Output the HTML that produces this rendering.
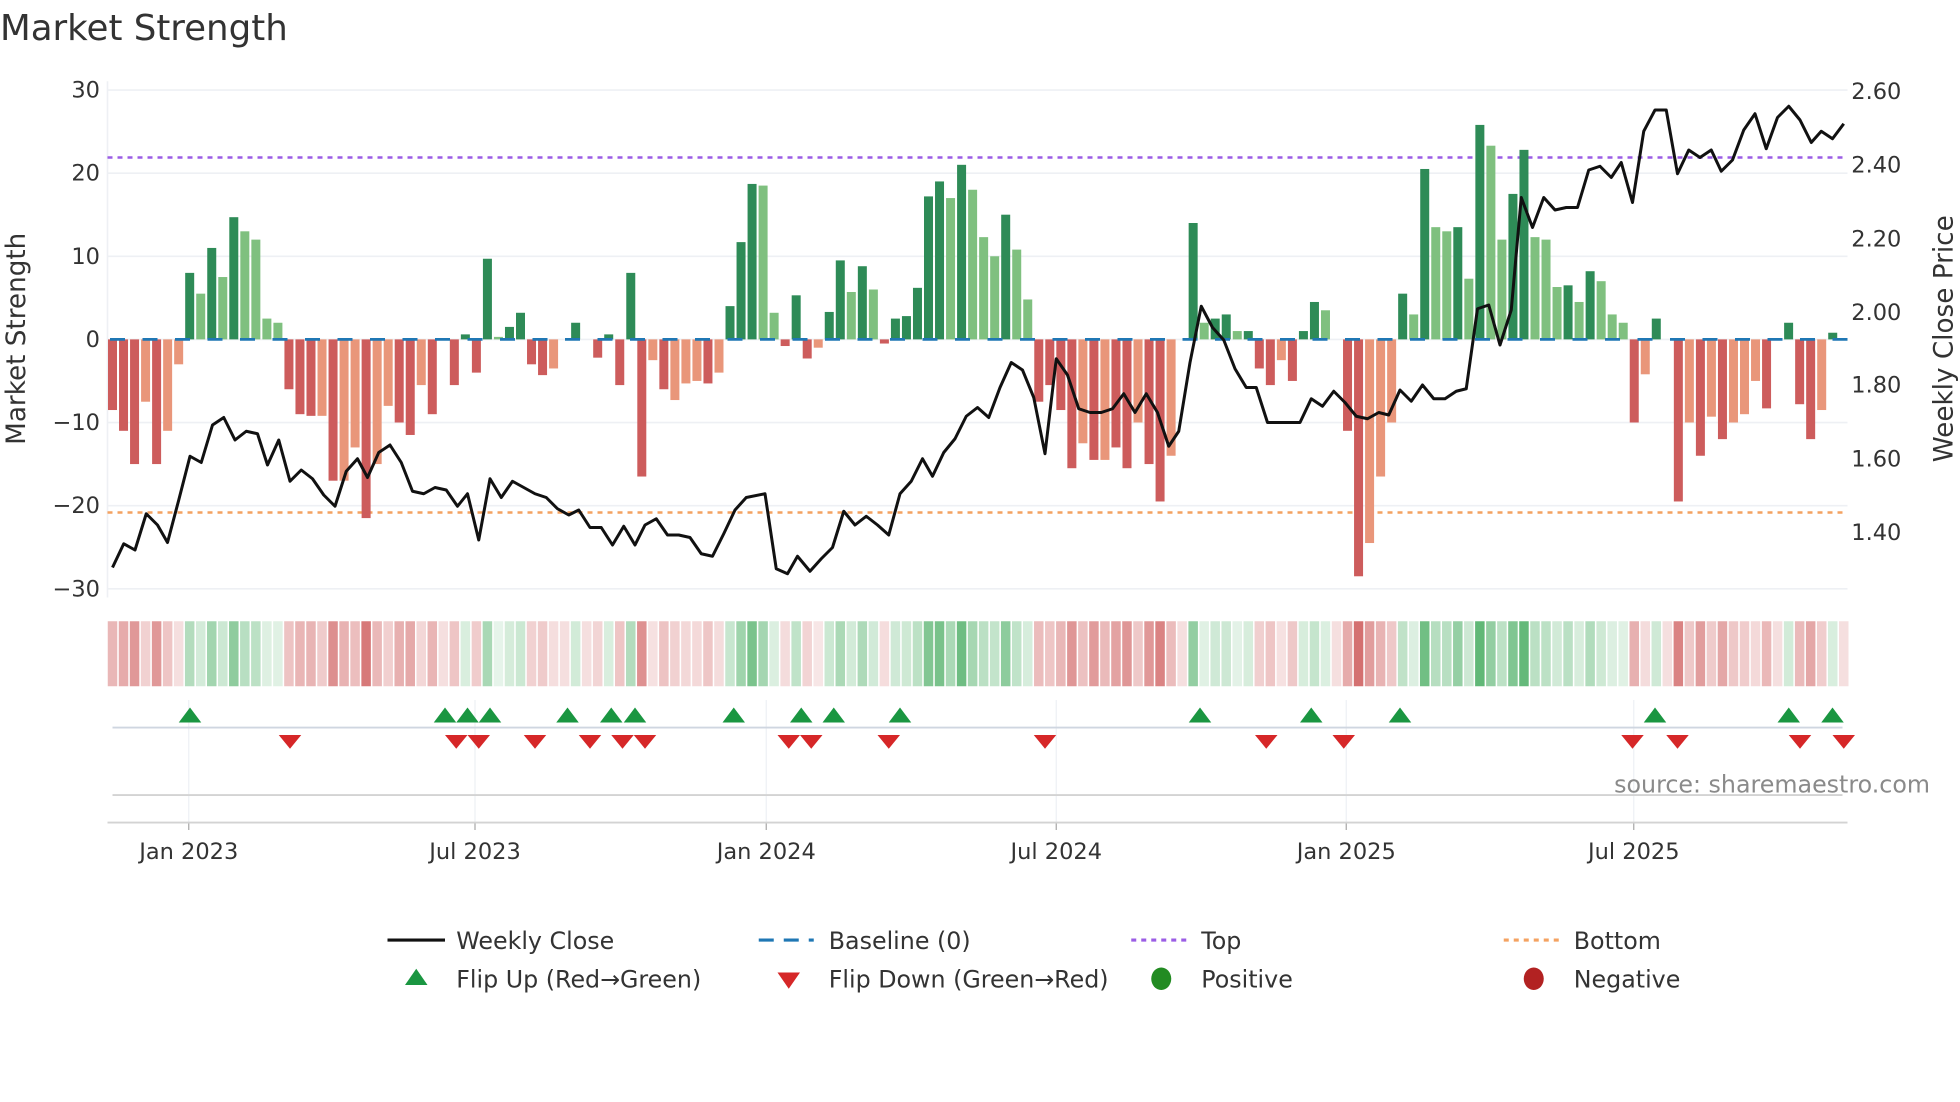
<!DOCTYPE html>
<html><head><meta charset="utf-8"><style>
html,body{margin:0;padding:0;background:#fff;width:1960px;height:1102px;overflow:hidden}
svg{display:block}
text{font-family:"DejaVu Sans","Liberation Sans",sans-serif;fill:#333}
</style></head><body>
<svg id="s" width="1960" height="1102" viewBox="0 0 1568 881.6" xmlns="http://www.w3.org/2000/svg">
<text x="0" y="32" font-size="28.5">Market Strength</text>
<g id="grid"></g>
<g id="bars"></g>
<g id="heat"></g>
<g id="price"></g>
<g id="marks"></g>
<g id="labels" font-size="18"></g>
<text x="0" y="0" font-size="21" transform="translate(20,271) rotate(-90)" text-anchor="middle">Market Strength</text>
<text x="0" y="0" font-size="21" transform="translate(1562,271) rotate(-90)" text-anchor="middle">Weekly Close Price</text>
<text x="1544" y="634" font-size="19" text-anchor="end" style="fill:#8a8a8a">source: sharemaestro.com</text>
<g font-size="19">
<line x1="310" y1="752" x2="356" y2="752" stroke="#111" stroke-width="2.5"/>
<text x="365" y="759">Weekly Close</text>
<line x1="607" y1="752" x2="651" y2="752" stroke="#1f77b4" stroke-width="2.5" stroke-dasharray="12,8"/>
<text x="663" y="759">Baseline (0)</text>
<line x1="905" y1="752" x2="949" y2="752" stroke="#9b5de5" stroke-width="2.5" stroke-dasharray="4,4"/>
<text x="961" y="759">Top</text>
<line x1="1203" y1="752" x2="1247" y2="752" stroke="#f4a261" stroke-width="2.5" stroke-dasharray="4,4"/>
<text x="1259" y="759">Bottom</text>
<polygon points="324,788 342,788 333,775" fill="#1a9641"/>
<text x="365" y="790">Flip Up (Red→Green)</text>
<polygon points="622,778 640,778 631,791" fill="#d62728"/>
<text x="663" y="790">Flip Down (Green→Red)</text>
<ellipse cx="929" cy="783" rx="8" ry="9" fill="#228b22"/>
<text x="961" y="790">Positive</text>
<ellipse cx="1227" cy="783" rx="8" ry="9" fill="#b22222"/>
<text x="1259" y="790">Negative</text>
</g>
</svg>
<script>
var NS="http://www.w3.org/2000/svg";
function el(p,t,a){var e=document.createElementNS(NS,t);for(var k in a)e.setAttribute(k,a[k]);document.getElementById(p).appendChild(e);return e;}
var Y=function(v){return 271.5-v*6.65};
[30,20,10,0,-10,-20,-30].forEach(function(v){el("grid","line",{x1:86,x2:1478,y1:Y(v),y2:Y(v),stroke:"#eef0f4","stroke-width":1.3});
 var t=el("labels","text",{x:80,y:Y(v)+6,"text-anchor":"end"});t.textContent=(v<0?"\u2212"+(-v):v);});
el("grid","line",{x1:86,x2:86,y1:65,y2:478,stroke:"#eef0f4","stroke-width":1.3});
[["2.60",73],["2.40",132],["2.20",191],["2.00",250],["1.80",308],["1.60",367],["1.40",426]].forEach(function(a){var t=el("labels","text",{x:1481,y:a[1]+6});t.textContent=a[0];});
var ticks=[[151,"Jan 2023"],[380,"Jul 2023"],[613,"Jan 2024"],[845,"Jul 2024"],[1077,"Jan 2025"],[1307,"Jul 2025"]];
ticks.forEach(function(a){el("grid","line",{x1:a[0],x2:a[0],y1:560,y2:658,stroke:"#eef0f4","stroke-width":1});
 el("grid","line",{x1:a[0],x2:a[0],y1:658,y2:664,stroke:"#aaa","stroke-width":1});
 var t=el("labels","text",{x:a[0],y:687,"text-anchor":"middle"});t.textContent=a[1];});
el("grid","line",{x1:90,x2:1474,y1:582,y2:582,stroke:"#cfd6e0","stroke-width":1.5});
el("grid","line",{x1:90,x2:1474,y1:636,y2:636,stroke:"#d3d3d3","stroke-width":1.5});
el("grid","line",{x1:86,x2:1478,y1:658,y2:658,stroke:"#d3d3d3","stroke-width":1.5});
el("grid","line",{x1:86,x2:1478,y1:126,y2:126,stroke:"#9b5de5","stroke-width":2,"stroke-dasharray":"4,4"});
el("grid","line",{x1:86,x2:1478,y1:410,y2:410,stroke:"#f4a261","stroke-width":2,"stroke-dasharray":"4,4"});
var B="-8.5d -11d -15d -7.5l -15d -11l -3l 8d 5.5l 11d 7.5l 14.7d 13l 12l 2.5l 2l -6d -9d -9.2d -9.2l -17d -17l -13l -21.5d -15l -8l -10d -11.5d -5.5l -9d 0d -5.5d 0.6d -4d 9.7d 0.3l 1.5d 3.2d -3d -4.3d -3.5l 0d 2d 0d -2.2d 0.6d -5.5d 8d -16.5d -2.5l -6d -7.3l -5.3l -5l -5.3d -4l 4d 11.7d 18.7d 18.5l 3.2l -0.8d 5.3d -2.3d -1l 3.3d 9.5d 5.7l 8.8d 6l -0.5d 2.5d 2.8d 6.2d 17.2d 19d 17l 21d 18l 12.3l 10l 15d 10.8l 4.8l -7.5d -5.5d -8.5d -15.5d -12.5l -14.5d -14.5l -13d -15.5d -10l -15d -19.5d -14l 0d 14d 2l 2.5d 3d 1l 1d -3.5d -5.5d -2.5l -5d 1d 4.5d 3.5l 0d -11d -28.5d -24.5l -16.5l -10l 5.5d 3l 20.5d 13.5l 13l 13.5d 7.3l 25.8d 23.3l 12l 17.5d 22.8d 12.3l 12l 6.3l 6.5d 4.5l 8.2d 7l 3l 2l -10d -4.2l 2.5d 0d -19.5d -10l -14d -9.3l -12d -10l -9l -5l -8.3d -0d 2d -7.8d -12d -8.5l 0.8d 0d".split(" ");
var n=B.length, step=(1475-90)/(n-1);
var col={gd:"#2e8b57",gl:"#7fc07f",rd:"#cd5c5c",rl:"#e9967a"};
B.forEach(function(s,i){var v=parseFloat(s),f=s.slice(-1),x=90+i*step;
 if(Math.abs(v)>0.05){var c=col[(v>0?"g":"r")+f];var y1=Y(Math.max(v,0)),y2=Y(Math.min(v,0));
 el("bars","rect",{x:x-3.6,y:y1,width:7.2,height:y2-y1,fill:c});}
 var a=Math.min(1,0.22+Math.abs(v)/30);
 el("heat","rect",{x:x-3.8,y:497,width:7.6,height:52,fill:v>0?"#3aa655":"#c94c4c","fill-opacity":a*(f=="d"?0.8:0.55)});
});
el("bars","line",{x1:88,x2:1478,y1:271.5,y2:271.5,stroke:"#1f77b4","stroke-width":2.2,"stroke-dasharray":"12,14"});
var P="90,454 99,435 108,440 117,411 126,420 134,434 143,400 152,365 161,370 170,340 179,334 188,352 197,345 206,347 214,372 223,352 232,385 241,376 250,383 259,396 268,405 277,377 286,367 294,382 303,362 312,356 321,370 330,393 339,395 348,390 357,392 366,405 374,395 383,432 392,383 401,398 410,385 419,390 428,395 437,398 446,407 455,412 463,408 472,422 481,422 490,436 499,421 508,436 516,420 525,415 534,428 543,428 552,430 561,443 570,445 579,427 588,408 597,398 612,395 621,455 630,459 638,445 648,457 657,447 666,438 675,409 684,420 693,413 702,420 711,428 720,395 729,385 738,367 746,381 755,362 764,351 773,333 782,326 791,334 800,310 809,290 818,296 827,318 836,363 845,287 854,300 863,327 872,330 881,330 890,327 899,315 908,330 917,315 926,330 935,357 943,345 952,290 961,245 970,262 979,272 988,295 997,310 1005,310 1014,338 1040,338 1049,319 1058,325 1067,313 1076,322 1085,333 1094,335 1103,330 1111,332 1120,312 1129,321 1138,308 1147,319 1156,319 1165,313 1173,311 1182,247 1191,244 1200,276 1209,248 1217,158 1226,182 1235,158 1244,168 1253,166 1262,166 1271,136 1280,133 1289,142 1297,130 1306,162 1315,105 1324,88 1333,88 1342,139 1351,120 1360,126 1369,120 1377,137 1386,128 1395,104 1404,91 1413,119 1422,94 1431,85 1440,96 1449,114 1457,105 1466,111 1475,99";
el("price","polyline",{points:P,fill:"none",stroke:"#111","stroke-width":2.4,"stroke-linejoin":"round"});
[152,356,374,392,454,489,508,587,641,667,720,960,1049,1120,1324,1431,1466].forEach(function(x){el("marks","polygon",{points:(x-9)+",578 "+(x+9)+",578 "+x+",566",fill:"#1a9641"});});
[232,365,383,428,472,498,516,631,649,711,836,1013,1075,1306,1342,1440,1475].forEach(function(x){el("marks","polygon",{points:(x-9)+",588 "+(x+9)+",588 "+x+",599",fill:"#d62728"});});
</script>
</body></html>
